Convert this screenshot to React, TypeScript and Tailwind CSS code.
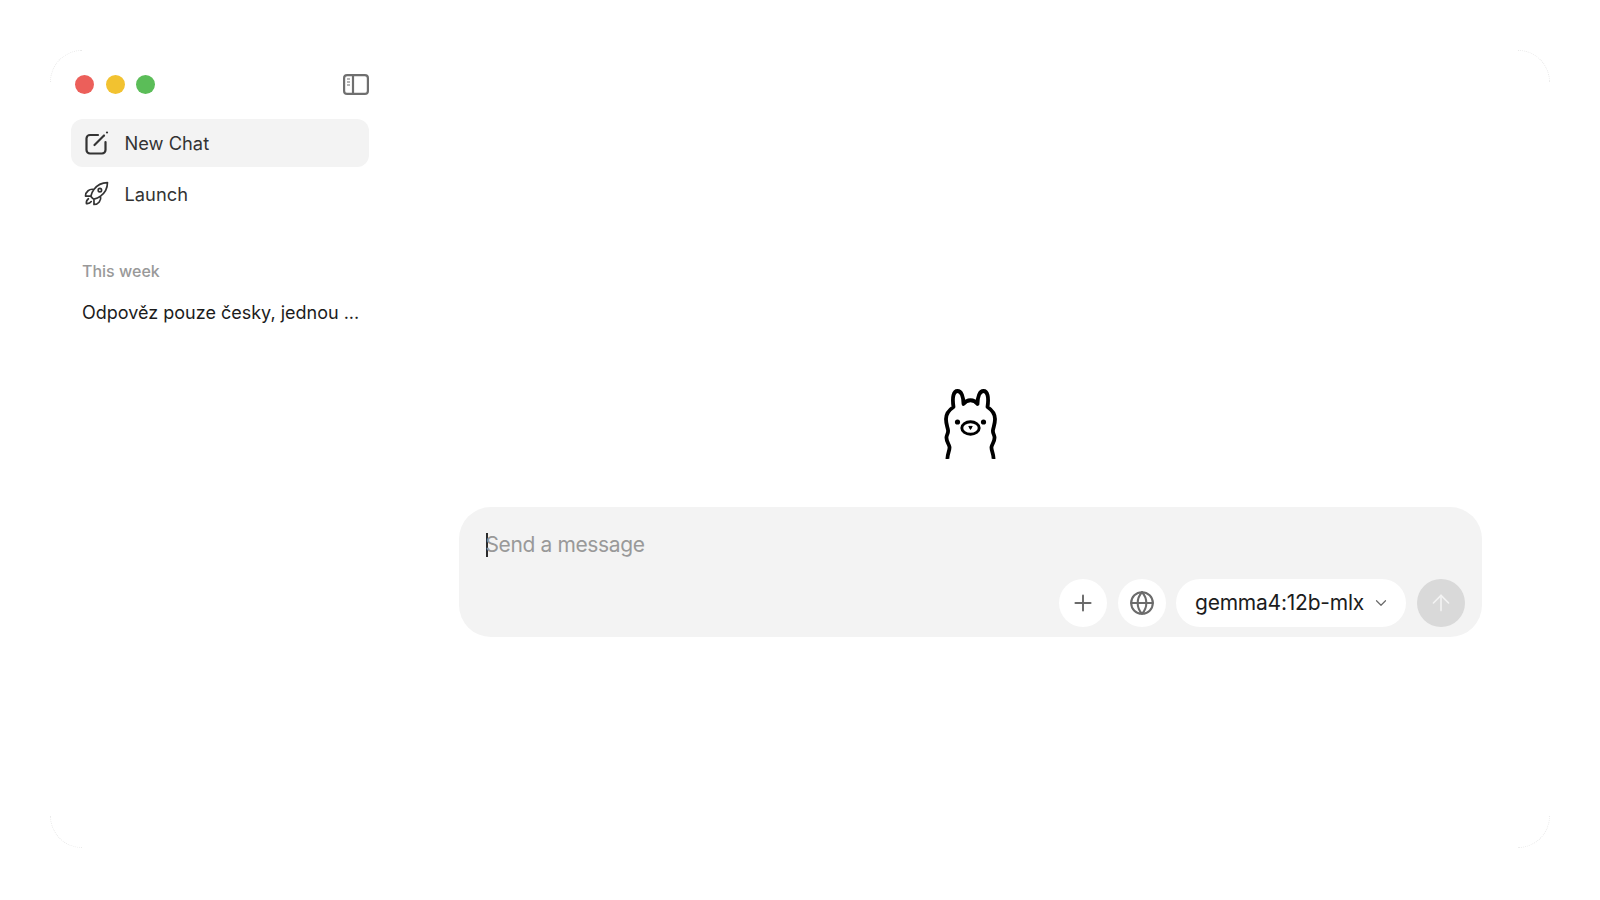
import { ChevronDown, ArrowUp, Globe, Plus } from 'lucide-react'
import { HiOutlineRocketLaunch } from 'react-icons/hi2'

function SidebarIcon() {
  return (
    <svg width="26" height="21" viewBox="0 0 26 21" fill="none" stroke="#6f6f6f" strokeWidth="2.2">
      <rect x="1.1" y="1.1" width="23.8" height="18.8" rx="3" />
      <path d="M10 1v19" />
      <path d="M4 5h3M4 8h3M4 11h3" strokeWidth="1.2" />
    </svg>
  )
}

function NewChatIcon() {
  return (
    <svg width="24" height="24" viewBox="0 0 24 24" fill="none" stroke="#333" strokeWidth="2.2" strokeLinecap="round" strokeLinejoin="round">
      <path d="M13 4H5A3.5 3.5 0 0 0 1.5 7.5V19A3.5 3.5 0 0 0 5 22.5h12a3.5 3.5 0 0 0 3.5-3.5v-8" />
      <path d="M9.5 14 19 4.5" />
      <path d="M22 1.5h.01" />
    </svg>
  )
}

function Llama() {
  return (
    <svg width="53" height="70" viewBox="0 0 53 70" fill="none" stroke="#000" strokeWidth="3.8" strokeLinecap="butt" strokeLinejoin="round">
      <path d="M3.5 70C3 66 6 61 5.5 58C5 55 2 52 2.5 48C3 45 4.5 44 4 41C3.5 38 2 35 2 30C2 25 5 21 9.5 18C8 8 9.5 2 13.5 2C17.5 2 19.5 8 19.5 15C23 10 30 10 33.5 15C33.5 8 35.5 2 39.5 2C43.5 2 45 8 43.5 18C48 21 51 25 51 30C51 35 49.5 38 49 41C48.5 44 50 45 50.5 48C51 52 48 55 47.5 58C47 61 50 66 49.5 70" />
      <ellipse cx="26.5" cy="39" rx="8.7" ry="6.2" strokeWidth="2.9" />
      <circle cx="13.5" cy="33" r="2.6" fill="#000" stroke="none" />
      <circle cx="39.5" cy="33" r="2.6" fill="#000" stroke="none" />
      <path d="M24.8 37.4h3.4L26.5 40.4z" fill="#000" strokeWidth="1" />
    </svg>
  )
}

const cornerClass = 'absolute w-8 h-8 border-[#e9e9e9] border-dotted'

export default function App() {
  return (
    <div className="w-full h-[900px] bg-white p-[50px] font-['Inter',sans-serif]">
      <div className="relative flex h-[798px] w-[1500px]">
        {/* faint window corners */}
        <span className={`${cornerClass} top-0 left-0 border-t border-l rounded-tl-[32px]`} />
        <span className={`${cornerClass} top-0 right-0 border-t border-r rounded-tr-[32px]`} />
        <span className={`${cornerClass} bottom-0 left-0 border-b border-l rounded-bl-[32px]`} />
        <span className={`${cornerClass} bottom-0 right-0 border-b border-r rounded-br-[32px]`} />

        {/* Sidebar */}
        <aside className="w-[340px] shrink-0 pl-[21px] pr-[21px]">
          <div className="flex h-[69px] items-center justify-between pl-[4px]">
            <div className="flex gap-[11.5px]">
              <div className="h-[19px] w-[19px] rounded-full bg-[#ec5f5a]" />
              <div className="h-[19px] w-[19px] rounded-full bg-[#f2c230]" />
              <div className="h-[19px] w-[19px] rounded-full bg-[#5bbd58]" />
            </div>
            <SidebarIcon />
          </div>
          <div className="flex h-[48px] items-center gap-[16px] rounded-[12px] bg-[#f3f3f3] pl-[13.5px] text-[18.3px] text-[#333333]">
            <NewChatIcon />
            <span className="mt-[2px]">New Chat</span>
          </div>
          <div className="mt-[3px] flex h-[48px] items-center gap-[16px] pl-[13.5px] text-[18.3px] text-[#333333]">
            <HiOutlineRocketLaunch className="h-[27px] w-[27px] -ml-[2px] -mr-[1px] -mt-[1px]" />
            <span className="mt-[1px]">Launch</span>
          </div>
          <div className="mt-[42.5px] pl-[11px] text-[16px] font-medium leading-[20px] text-[#999999]">This week</div>
          <div className="mt-[20.5px] whitespace-nowrap pl-[11px] text-[18px] leading-[24px] text-[#1c1c1c]">Odpověz pouze česky, jednou ...</div>
        </aside>

        {/* Main */}
        <main className="flex flex-1 flex-col items-center pt-[339px]">
          <Llama />
          <div className="mt-[48px] h-[130px] w-[1023px] rounded-[32px] bg-[#f3f3f3]">
            <div className="flex h-[72px] items-center pl-[27px] pt-[4px] text-[21px] tracking-[-0.38px] text-[#999999]">
              <span className="mr-[-2px] h-[24px] w-[2px] bg-[#2a2a2a]" />
              <span>Send a message</span>
            </div>
            <div className="flex items-center justify-end gap-[10.5px] pr-[17px]">
              <button className="flex h-[48px] w-[48px] items-center justify-center rounded-full bg-white">
                <Plus className="h-[26px] w-[26px] text-[#6b6b6b]" strokeWidth={1.8} />
              </button>
              <button className="flex h-[48px] w-[48px] items-center justify-center rounded-full bg-white">
                <Globe className="h-[26px] w-[26px] text-[#6b6b6b]" strokeWidth={1.9} />
              </button>
              <button className="flex h-[48px] w-[230px] items-center rounded-full bg-white pl-[19px] text-[21px] tracking-[-0.22px] text-[#1c1c1c]">
                <span>gemma4:12b-mlx</span>
                <ChevronDown className="ml-[8px] h-[18px] w-[18px] text-[#6b6b6b]" strokeWidth={1.6} />
              </button>
              <button className="flex h-[48px] w-[48px] items-center justify-center rounded-full bg-[#d9d9d9]">
                <ArrowUp className="h-[26px] w-[26px] text-[#f3f3f3]" strokeWidth={1.5} />
              </button>
            </div>
          </div>
        </main>
      </div>
    </div>
  )
}
